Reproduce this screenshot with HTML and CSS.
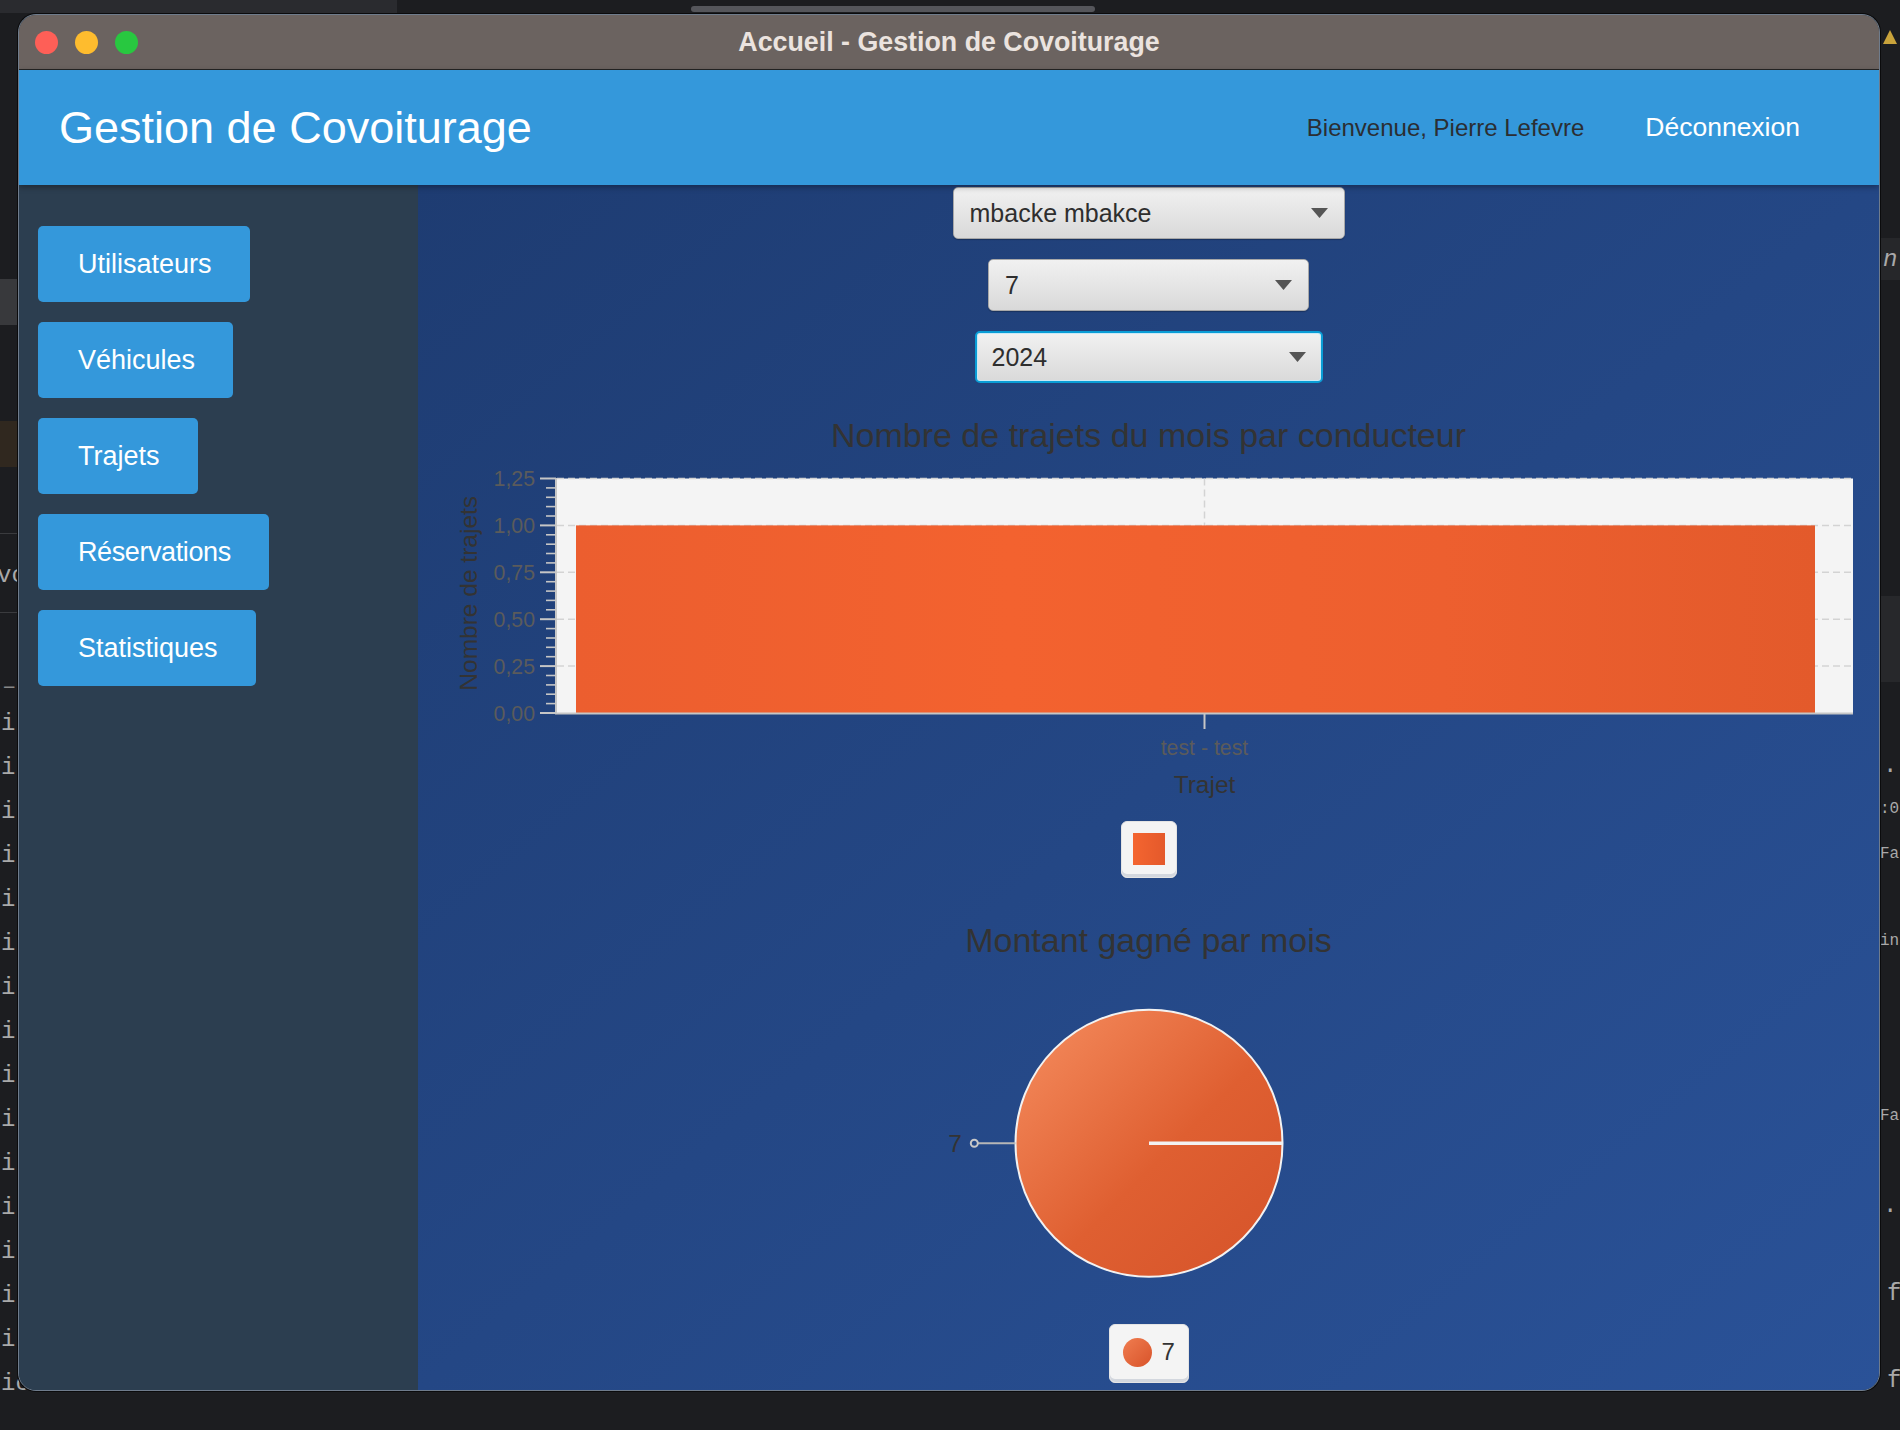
FILE: index.html
```html
<!DOCTYPE html>
<html lang="fr">
<head>
<meta charset="utf-8">
<title>Accueil - Gestion de Covoiturage</title>
<link rel="stylesheet" href="styles.css">
</head>
<body>
<div class="backdrop">
  <div class="bd-topleft"></div>
  <div class="bd-thumb"></div>
  <div class="bd-left-sel"></div>
  <div class="bd-left-warn"></div>
  <div class="bd-hline bd-h1"></div>
  <div class="bd-hline bd-h2"></div>
  <span class="bd-text bd-vc">vc</span>
  <span class="bd-text bd-dash">–</span>
  <pre class="bd-text bd-icol">i
i
i
i
i
i
i
i
i
i
i
i
i
i
i
ic</pre>
  <div class="bd-right-band"></div>
  <div class="bd-right-block"></div>
  <svg class="bd-warn" width="16" height="16" viewBox="0 0 16 16"><polygon points="8,1 15,15 1,15" fill="#c9a33b"/></svg>
  <span class="bd-text bd-r bd-r1"><i>n</i></span>
  <span class="bd-text bd-r bd-r2">.</span>
  <span class="bd-text bd-r bd-small bd-r3">:0</span>
  <span class="bd-text bd-r bd-small bd-r4">Fa</span>
  <span class="bd-text bd-r bd-small bd-r5">in</span>
  <span class="bd-text bd-r bd-small bd-r6">Fa</span>
  <span class="bd-text bd-r bd-r7">.</span>
  <span class="bd-text bd-r bd-r8">f</span>
  <span class="bd-text bd-r bd-r9">f</span>
</div>

<div class="window">
  <div class="titlebar">
    <div class="lights">
      <span class="light red"></span>
      <span class="light yellow"></span>
      <span class="light green"></span>
    </div>
    <div class="wtitle">Accueil - Gestion de Covoiturage</div>
    <div></div>
  </div>

  <header class="appbar">
    <h1 class="brand">Gestion de Covoiturage</h1>
    <div class="user">
      <span class="welcome">Bienvenue, Pierre Lefevre</span>
      <span class="logout">Déconnexion</span>
    </div>
  </header>

  <div class="app-body">
    <nav class="sidebar">
      <button class="nav-btn">Utilisateurs</button>
      <button class="nav-btn">Véhicules</button>
      <button class="nav-btn">Trajets</button>
      <button class="nav-btn nav-btn-tight">Réservations</button>
      <button class="nav-btn">Statistiques</button>
    </nav>

    <main class="content">
      <div class="combo c1"><span>mbacke mbakce</span><svg class="arrow" width="17" height="10" viewBox="0 0 17 10"><polygon points="0,0 17,0 8.5,10" fill="#555"/></svg></div>
      <div class="combo c2"><span>7</span><svg class="arrow" width="17" height="10" viewBox="0 0 17 10"><polygon points="0,0 17,0 8.5,10" fill="#555"/></svg></div>
      <div class="combo c3 focused"><span>2024</span><svg class="arrow" width="17" height="10" viewBox="0 0 17 10"><polygon points="0,0 17,0 8.5,10" fill="#555"/></svg></div>

      <h2 class="chart-title">Nombre de trajets du mois par conducteur</h2>

      <svg class="bar-chart" width="1461" height="343" viewBox="0 0 1461 343">
        <defs>
          <linearGradient id="barGrad" x1="0" y1="0" x2="1" y2="0">
            <stop offset="0" stop-color="#ec5e2f"/>
            <stop offset="0.35" stop-color="#f3622f"/>
            <stop offset="0.7" stop-color="#ed5f2f"/>
            <stop offset="1" stop-color="#e35a2b"/>
          </linearGradient>
        </defs>
        <rect x="139" y="21.5" width="1296" height="234.5" fill="#f4f4f4"/>
        <g stroke="#d3d3d3" stroke-width="1.5" stroke-dasharray="7 4">
          <line x1="139" y1="21.5" x2="1435" y2="21.5"/>
          <line x1="139" y1="68.4" x2="1435" y2="68.4"/>
          <line x1="139" y1="115.3" x2="1435" y2="115.3"/>
          <line x1="139" y1="162.2" x2="1435" y2="162.2"/>
          <line x1="139" y1="209.1" x2="1435" y2="209.1"/>
          <line x1="786.5" y1="21.5" x2="786.5" y2="256"/>
        </g>
        <rect x="158" y="68.4" width="1239" height="187.6" fill="url(#barGrad)"/>
        <g stroke="#c6c6c6" stroke-width="2">
          <line x1="138" y1="21" x2="138" y2="257"/>
          <line x1="137" y1="256.5" x2="1435" y2="256.5"/>
          <line x1="122" y1="21.5" x2="138" y2="21.5"/>
          <line x1="122" y1="68.4" x2="138" y2="68.4"/>
          <line x1="122" y1="115.3" x2="138" y2="115.3"/>
          <line x1="122" y1="162.2" x2="138" y2="162.2"/>
          <line x1="122" y1="209.1" x2="138" y2="209.1"/>
          <line x1="122" y1="256" x2="138" y2="256"/>
          <line x1="786.5" y1="256" x2="786.5" y2="272"/>
        </g>
        <g stroke="#c6c6c6" stroke-width="1.6">
          <line x1="128" y1="30.9" x2="138" y2="30.9"/>
          <line x1="128" y1="40.3" x2="138" y2="40.3"/>
          <line x1="128" y1="49.6" x2="138" y2="49.6"/>
          <line x1="128" y1="59.0" x2="138" y2="59.0"/>
          <line x1="128" y1="77.8" x2="138" y2="77.8"/>
          <line x1="128" y1="87.2" x2="138" y2="87.2"/>
          <line x1="128" y1="96.5" x2="138" y2="96.5"/>
          <line x1="128" y1="105.9" x2="138" y2="105.9"/>
          <line x1="128" y1="124.7" x2="138" y2="124.7"/>
          <line x1="128" y1="134.1" x2="138" y2="134.1"/>
          <line x1="128" y1="143.4" x2="138" y2="143.4"/>
          <line x1="128" y1="152.8" x2="138" y2="152.8"/>
          <line x1="128" y1="171.6" x2="138" y2="171.6"/>
          <line x1="128" y1="181.0" x2="138" y2="181.0"/>
          <line x1="128" y1="190.3" x2="138" y2="190.3"/>
          <line x1="128" y1="199.7" x2="138" y2="199.7"/>
          <line x1="128" y1="218.5" x2="138" y2="218.5"/>
          <line x1="128" y1="227.9" x2="138" y2="227.9"/>
          <line x1="128" y1="237.2" x2="138" y2="237.2"/>
          <line x1="128" y1="246.6" x2="138" y2="246.6"/>
        </g>
        <g class="tick-label" text-anchor="end">
          <text x="117" y="29.2">1,25</text>
          <text x="117" y="76.1">1,00</text>
          <text x="117" y="123.0">0,75</text>
          <text x="117" y="169.9">0,50</text>
          <text x="117" y="216.8">0,25</text>
          <text x="117" y="263.7">0,00</text>
        </g>
        <text class="axis-label" x="58.7" y="136.3" text-anchor="middle" transform="rotate(-90 58.7 136.3)">Nombre de trajets</text>
        <text class="tick-label" x="786.5" y="298" text-anchor="middle">test - test</text>
        <text class="axis-label" x="786.5" y="336.3" text-anchor="middle">Trajet</text>
      </svg>

      <div class="legend legend-bar"><span class="swatch-sq"></span></div>

      <h2 class="chart-title pie-title">Montant gagné par mois</h2>

      <svg class="pie-chart" width="1461" height="338" viewBox="0 0 1461 338">
        <defs>
          <linearGradient id="pieGrad" x1="0" y1="0" x2="1" y2="1">
            <stop offset="0" stop-color="#f68e60"/>
            <stop offset="0.55" stop-color="#df5f31"/>
            <stop offset="1" stop-color="#d5532a"/>
          </linearGradient>
        </defs>
        <circle cx="731" cy="181.3" r="133.5" fill="url(#pieGrad)" stroke="#f2f2f2" stroke-width="2"/>
        <line x1="731" y1="181.3" x2="864.5" y2="181.3" stroke="#f2f2f2" stroke-width="3.5"/>
        <line x1="560" y1="181.3" x2="597.5" y2="181.3" stroke="#b7b7b7" stroke-width="2"/>
        <circle cx="556.3" cy="181.3" r="3.5" fill="none" stroke="#c8c8c8" stroke-width="2"/>
        <text class="pie-label" x="544" y="189.8" text-anchor="end">7</text>
      </svg>

      <div class="legend legend-pie"><span class="swatch-dot"></span><span class="legend-text">7</span></div>
    </main>
  </div>
</div>
</body>
</html>
```

FILE: styles.css
```css
* {
  box-sizing: border-box;
}

html,
body {
  margin: 0;
  padding: 0;
}

body {
  width: 1900px;
  height: 1430px;
  overflow: hidden;
  position: relative;
  background: #1c1d20;
  font-family: "Liberation Sans", Arial, sans-serif;
}

/* ---------- desktop behind the window ---------- */
.backdrop {
  position: absolute;
  inset: 0;
}

.bd-topleft {
  position: absolute;
  left: 0;
  top: 0;
  width: 397px;
  height: 13px;
  background: #2a2b2f;
}

.bd-thumb {
  position: absolute;
  left: 691px;
  top: 6px;
  width: 404px;
  height: 6px;
  border-radius: 3px;
  background: #55565b;
}

.bd-left-sel {
  position: absolute;
  left: 0;
  top: 279px;
  width: 18px;
  height: 46px;
  background: #38393c;
}

.bd-left-warn {
  position: absolute;
  left: 0;
  top: 421px;
  width: 18px;
  height: 46px;
  background: #30281f;
}

.bd-hline {
  position: absolute;
  left: 0;
  width: 18px;
  height: 1px;
  background: #3a3b3e;
}

.bd-h1 {
  top: 533px;
}

.bd-h2 {
  top: 612px;
}

.bd-text {
  position: absolute;
  margin: 0;
  font-family: "Liberation Mono", "DejaVu Sans Mono", monospace;
  font-size: 24px;
  color: #a9a9a9;
  white-space: pre;
}

.bd-vc {
  left: -3px;
  top: 562px;
}

.bd-dash {
  left: 2px;
  top: 673px;
  color: #888;
}

.bd-icol {
  left: 1px;
  top: 702px;
  line-height: 44px;
}

.bd-right-band {
  position: absolute;
  left: 1880px;
  top: 238px;
  width: 20px;
  height: 42px;
  background: #26272a;
}

.bd-right-block {
  position: absolute;
  left: 1880px;
  top: 596px;
  width: 20px;
  height: 86px;
  background: #27282b;
}

.bd-warn {
  position: absolute;
  left: 1882px;
  top: 29px;
}

.bd-r {
  left: 1883px;
}

.bd-small {
  font-size: 16px;
  left: 1880px;
}

.bd-r1 { top: 246px; }
.bd-r2 { top: 752px; }
.bd-r3 { top: 800px; }
.bd-r4 { top: 845px; }
.bd-r5 { top: 932px; }
.bd-r6 { top: 1107px; }
.bd-r7 { top: 1192px; }
.bd-r8 { top: 1280px; left: 1887px; }
.bd-r9 { top: 1367px; left: 1887px; }

/* ---------- window ---------- */
.window {
  position: absolute;
  left: 18px;
  top: 14px;
  width: 1862px;
  height: 1377px;
  border: 1px solid #6f7c8c;
  border-radius: 18px;
  overflow: hidden;
  background: #2c3e50;
  display: flex;
  flex-direction: column;
  box-shadow: 0 0 0 1px #0b0b0c;
}

.titlebar {
  height: 55px;
  flex: 0 0 55px;
  background: #6b6360;
  border-bottom: 1px solid #252525;
  display: grid;
  grid-template-columns: 1fr auto 1fr;
  align-items: center;
  padding: 0 15px;
}

.lights {
  display: flex;
  gap: 17px;
  padding-left: 1px;
}

.light {
  width: 23px;
  height: 23px;
  border-radius: 50%;
}

.red {
  background: #fe5f57;
}

.yellow {
  background: #febc2e;
}

.green {
  background: #28c840;
}

.wtitle {
  color: #ebe3df;
  font-weight: 700;
  font-size: 26.8px;
  white-space: nowrap;
}

/* ---------- header ---------- */
.appbar {
  height: 115px;
  flex: 0 0 115px;
  background: #3498db;
  display: flex;
  align-items: center;
  justify-content: space-between;
  padding: 0 79px 0 40px;
  position: relative;
  z-index: 2;
  box-shadow: 0 2px 6px rgba(0, 0, 0, 0.35);
}

.brand {
  margin: 0;
  font-size: 45px;
  font-weight: 400;
  color: #ffffff;
  line-height: 1;
  white-space: nowrap;
}

.user {
  display: flex;
  align-items: center;
  gap: 61px;
  white-space: nowrap;
}

.welcome {
  font-size: 24px;
  color: #2b2e33;
}

.logout {
  font-size: 26.5px;
  color: #ffffff;
}

/* ---------- body ---------- */
.app-body {
  flex: 1;
  display: flex;
  min-height: 0;
}

.sidebar {
  width: 399px;
  flex: 0 0 399px;
  background: #2c3e50;
  padding: 41px 0 0 19px;
  display: flex;
  flex-direction: column;
  align-items: flex-start;
  gap: 20px;
}

.nav-btn {
  height: 76px;
  padding: 0 38px 0 40px;
  border: 0;
  border-radius: 5px;
  background: #3498db;
  color: #ffffff;
  font-family: inherit;
  font-size: 27px;
  line-height: 76px;
  white-space: nowrap;
}

.nav-btn-tight {
  letter-spacing: -0.4px;
}

.content {
  flex: 1;
  min-width: 0;
  background: linear-gradient(to bottom right, #1e3c72, #2a5298);
  display: flex;
  flex-direction: column;
  align-items: center;
  padding-top: 2px;
  overflow: hidden;
}

/* ---------- combo boxes ---------- */
.combo {
  flex: 0 0 auto;
  height: 52px;
  display: flex;
  align-items: center;
  justify-content: space-between;
  padding: 0 16px 0 16px;
  border: 1px solid #a8a8a8;
  border-radius: 5px;
  background: linear-gradient(#f1f1f1, #d9d9d9);
  color: #2e2e2e;
  font-size: 25px;
  box-shadow: 0 1px 1px rgba(0, 0, 0, 0.25);
}

.combo + .combo {
  margin-top: 20px;
}

.c1 {
  width: 392px;
}

.c2 {
  width: 321px;
}

.c3 {
  width: 348px;
}

.focused {
  border: 2px solid #0a9dd6;
  padding: 0 15px 0 15px;
  box-shadow: inset 0 0 0 1px #c9e9f6;
}

.arrow {
  display: block;
}

/* ---------- charts ---------- */
.chart-title {
  flex: 0 0 44px;
  margin: 30px 0 0 0;
  height: 44px;
  line-height: 44px;
  font-size: 34px;
  font-weight: 400;
  color: #333333;
  white-space: nowrap;
}

.pie-title {
  margin-top: 40px;
}

.bar-chart,
.pie-chart {
  display: block;
  flex: 0 0 auto;
  font-family: "Liberation Sans", Arial, sans-serif;
}

.tick-label {
  font-size: 21.3px;
  fill: #5b5b5b;
}

.axis-label {
  font-size: 24.5px;
  fill: #333333;
}

.pie-label {
  font-size: 24.5px;
  fill: #333333;
}

.legend {
  flex: 0 0 auto;
  background: #f4f4f4;
  border: 1px solid #e4e4e4;
  border-radius: 6px;
  box-shadow: inset 0 -3px 0 #d3d7de;
}

.legend-bar {
  margin-top: 21px;
  width: 56px;
  height: 57px;
  padding: 11px;
}

.swatch-sq {
  display: block;
  width: 32px;
  height: 32px;
  background: linear-gradient(to right, #f46530, #e4592b);
}

.legend-pie {
  margin-top: 24px;
  width: 80px;
  height: 59px;
  display: flex;
  align-items: center;
  gap: 10px;
  padding: 0 0 3px 13px;
}

.swatch-dot {
  width: 29px;
  height: 29px;
  border-radius: 50%;
  background: linear-gradient(to bottom right, #f07d50, #d8532a);
}

.legend-text {
  font-size: 24px;
  color: #333333;
}
```
